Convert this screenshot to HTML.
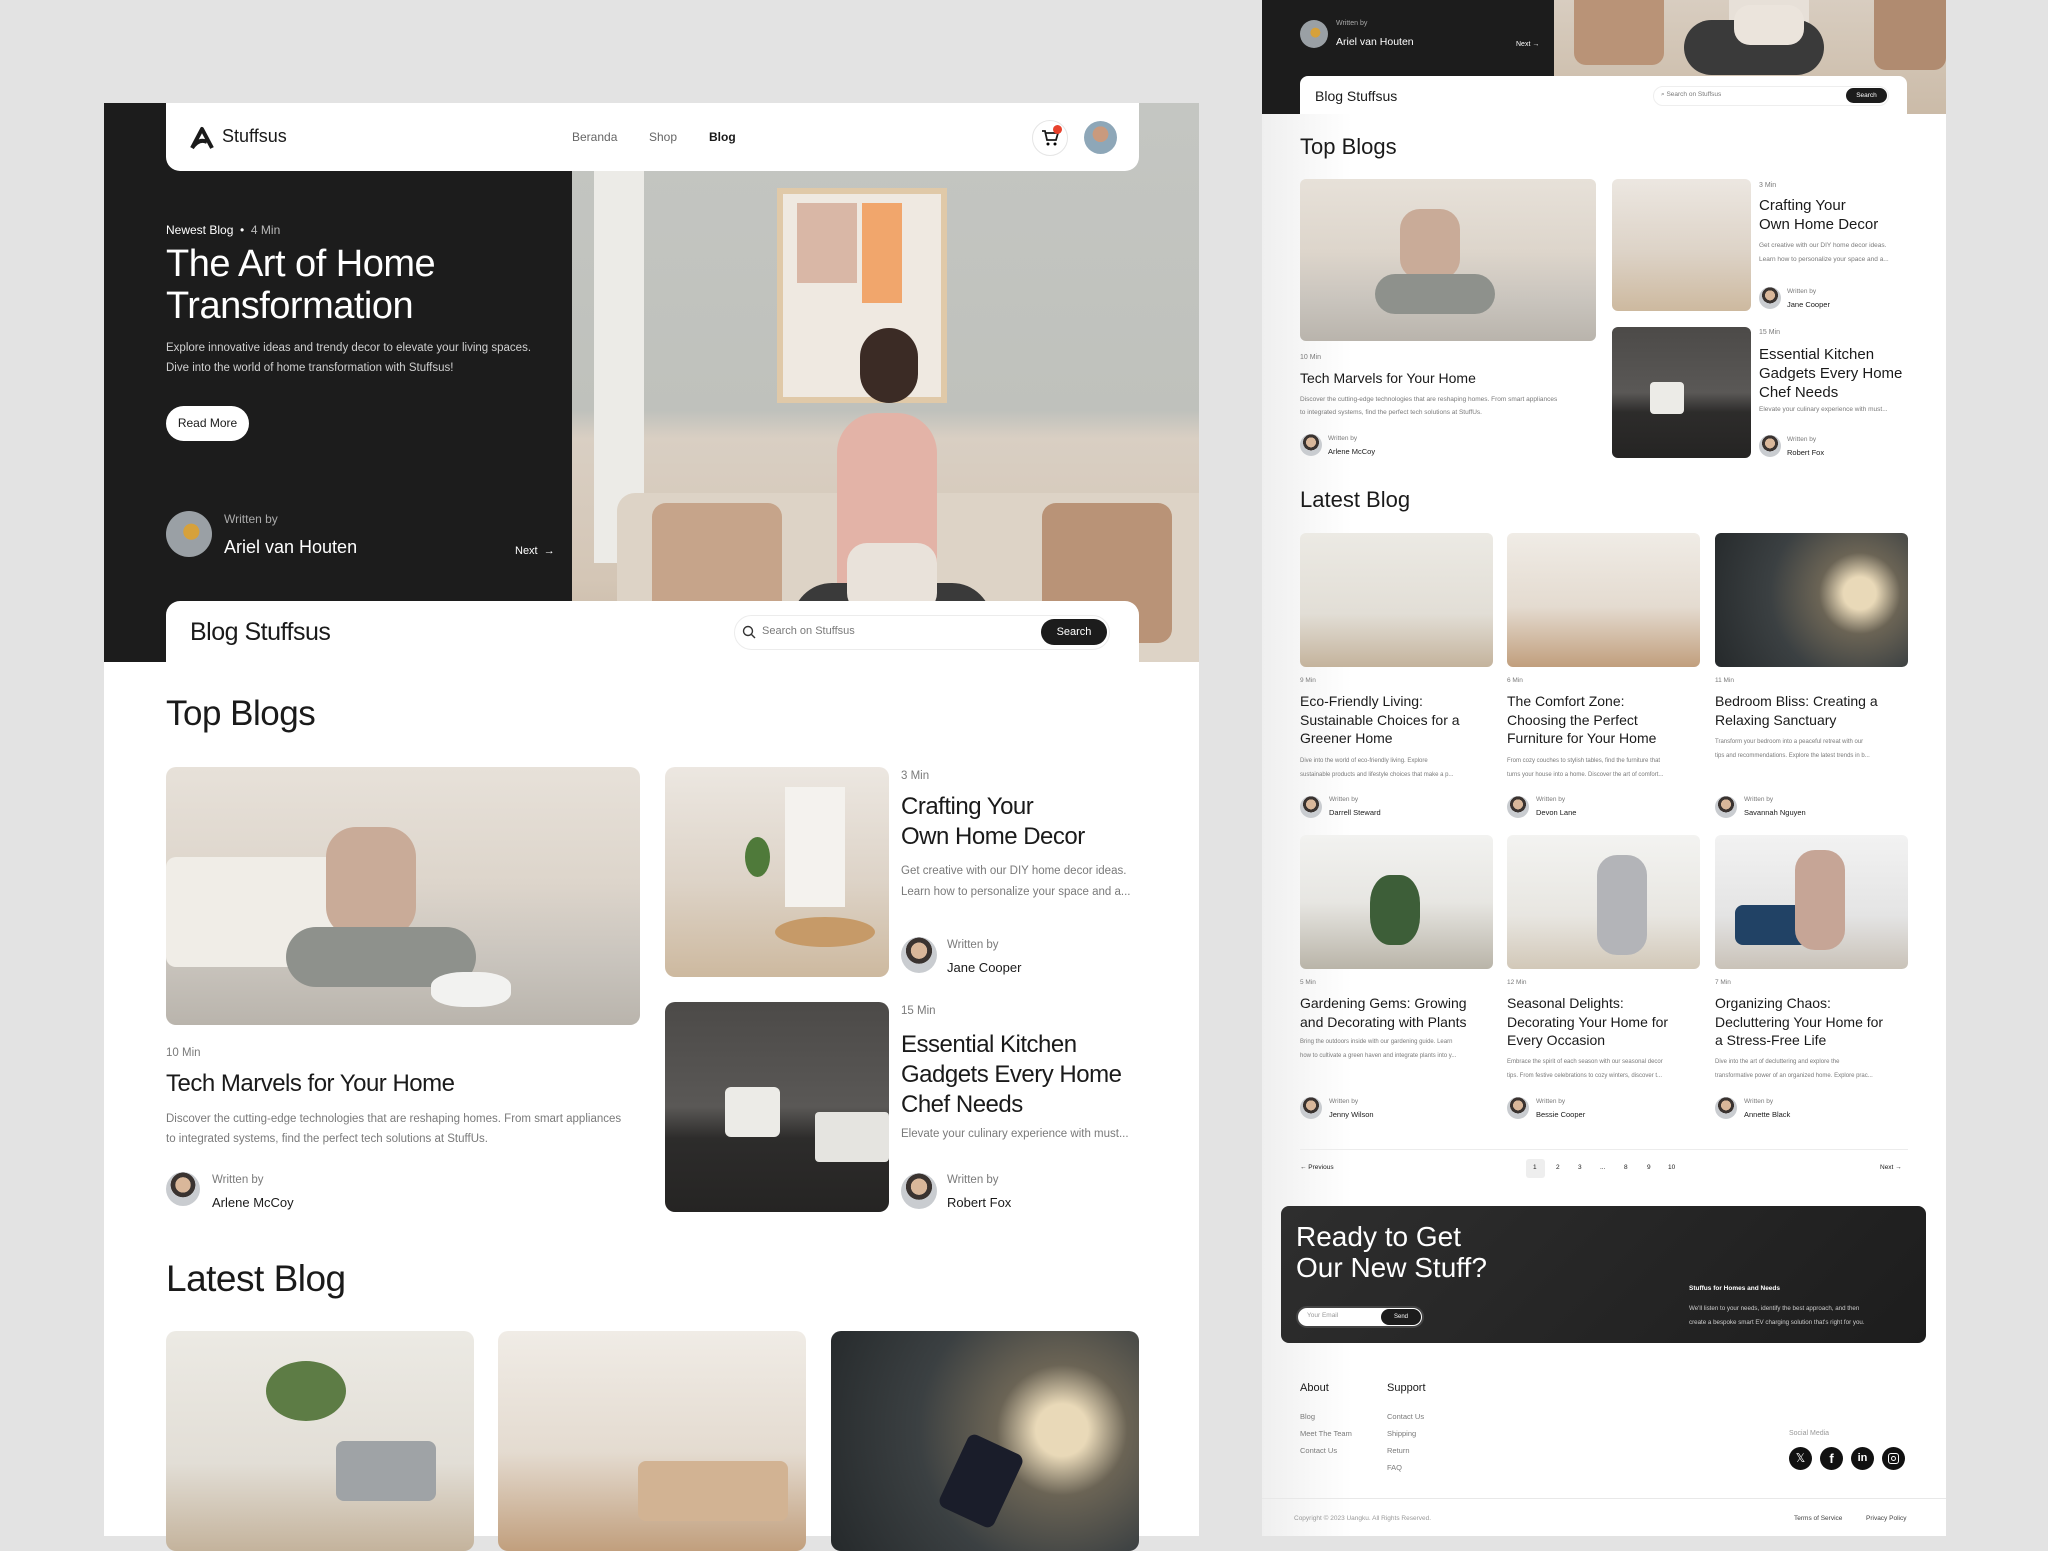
<!DOCTYPE html>
<html><head><meta charset="utf-8">
<style>
*{margin:0;padding:0;box-sizing:border-box}
body{width:2048px;height:1536px;background:#e3e3e3;font-family:"Liberation Sans",sans-serif;position:relative;overflow:hidden;color:#1a1a1a}
.a{position:absolute;white-space:nowrap}
.img{position:absolute;overflow:hidden}
.av{position:absolute;border-radius:50%;background:radial-gradient(circle at 50% 38%,#d9b79a 0 28%,#3a3330 29% 45%,#c9ccd0 46%)}
.g{color:#7a7a7a}
.t{letter-spacing:-0.5px}
</style></head><body>

<!-- LEFT CARD -->
<div class="a" style="left:104px;top:103px;width:1095px;height:1433px;background:#fff"></div>
<div class="a" style="left:104px;top:103px;width:468px;height:559px;background:#1c1c1c"></div>
<div class="img" style="left:572px;top:103px;width:627px;height:559px;background:linear-gradient(180deg,#c4c6c2 0%,#bfc1bc 55%,#d9cfc3 60%,#d4c6b6 85%,#c7b7a3 100%)">
  <div class="a" style="left:22px;top:60px;width:50px;height:400px;background:#ecebe7"></div>
  <div class="a" style="left:205px;top:85px;width:170px;height:215px;background:#efe9e1;border:6px solid #e0c9a8"></div>
  <div class="a" style="left:225px;top:100px;width:60px;height:80px;background:#d9b7a6"></div>
  <div class="a" style="left:290px;top:100px;width:40px;height:100px;background:#f1a66c"></div>
  <div class="a" style="left:45px;top:390px;width:600px;height:169px;background:#ddd3c6;border-radius:18px 18px 0 0"></div>
  <div class="a" style="left:80px;top:400px;width:130px;height:130px;background:#c6a48a;border-radius:14px"></div>
  <div class="a" style="left:470px;top:400px;width:130px;height:140px;background:#b99377;border-radius:14px"></div>
  <div class="a" style="left:265px;top:310px;width:100px;height:200px;background:#e3b3a7;border-radius:40px 40px 10px 10px"></div>
  <div class="a" style="left:288px;top:225px;width:58px;height:75px;background:#3b2b25;border-radius:30px"></div>
  <div class="a" style="left:220px;top:480px;width:200px;height:79px;background:#3a3a3a;border-radius:40px 40px 0 0"></div>
  <div class="a" style="left:275px;top:440px;width:90px;height:70px;background:#e9e2da;border-radius:20px"></div>
</div>
<!-- nav -->
<div class="a" style="left:166px;top:103px;width:973px;height:68px;background:#fff;border-radius:0 0 14px 14px"></div>
<svg class="a" style="left:189px;top:126px" width="26" height="24" viewBox="0 0 26 24"><path d="M3 22 L13 3 L23 22 M3 22 Q10 12 18 16" fill="none" stroke="#1a1a1a" stroke-width="4" stroke-linejoin="round"/></svg>
<div class="a" style="left:222px;top:126px;font-size:18px;font-weight:500">Stuffsus</div>
<div class="a g" style="left:572px;top:130px;font-size:12px;color:#666">Beranda</div>
<div class="a g" style="left:649px;top:130px;font-size:12px;color:#666">Shop</div>
<div class="a" style="left:709px;top:130px;font-size:12px;font-weight:bold">Blog</div>
<div class="a" style="left:1032px;top:120px;width:36px;height:36px;border-radius:50%;border:1px solid #e5e5e5;background:#fff"></div>
<svg class="a" style="left:1040px;top:128px" width="20" height="20" viewBox="0 0 20 20"><path d="M2 3h3l2 9h9l2-7H6" fill="none" stroke="#1a1a1a" stroke-width="1.8"/><circle cx="8" cy="16" r="1.5"/><circle cx="15" cy="16" r="1.5"/></svg>
<div class="a" style="left:1053px;top:125px;width:9px;height:9px;border-radius:50%;background:#e8412c"></div>
<div class="av" style="left:1084px;top:121px;width:33px;height:33px;background:radial-gradient(circle at 50% 40%,#c99a7e 0 30%,#8ea7b8 31%)"></div>
<!-- hero text -->
<div class="a" style="left:166px;top:223px;font-size:12px;color:#fff">Newest Blog &nbsp;•&nbsp; <span style="color:#bbb">4 Min</span></div>
<div class="a t" style="left:166px;top:243px;font-size:38px;line-height:42px;color:#fff;font-weight:500">The Art of Home<br>Transformation</div>
<div class="a" style="left:166px;top:338px;font-size:11.5px;line-height:20px;color:#cfcfcf">Explore innovative ideas and trendy decor to elevate your living spaces.<br>Dive into the world of home transformation with Stuffsus!</div>
<div class="a" style="left:166px;top:406px;width:83px;height:35px;border-radius:18px;background:#fff;font-size:12px;line-height:35px;text-align:center">Read More</div>
<div class="av" style="left:166px;top:511px;width:46px;height:46px;background:radial-gradient(circle at 55% 45%,#d6a13b 0 22%,#9aa0a5 23%)"></div>
<div class="a" style="left:224px;top:512px;font-size:12px;color:#aaa">Written by</div>
<div class="a" style="left:224px;top:537px;font-size:18px;color:#fff">Ariel van Houten</div>
<div class="a" style="left:515px;top:545px;font-size:11px;color:#fff">Next &nbsp;→</div>
<!-- blog stuffsus bar -->
<div class="a" style="left:166px;top:601px;width:973px;height:70px;background:#fff;border-radius:14px 14px 0 0"></div>
<div class="a t" style="left:190px;top:618px;font-size:25px;font-weight:500">Blog Stuffsus</div>
<div class="a" style="left:734px;top:615px;width:376px;height:35px;border:1px solid #ececec;border-radius:18px"></div>
<svg class="a" style="left:742px;top:625px" width="14" height="14" viewBox="0 0 14 14"><circle cx="6" cy="6" r="4.5" fill="none" stroke="#333" stroke-width="1.4"/><path d="M9.5 9.5L13 13" stroke="#333" stroke-width="1.4"/></svg>
<div class="a g" style="left:762px;top:625px;font-size:11px">Search on Stuffsus</div>
<div class="a" style="left:1041px;top:619px;width:66px;height:26px;border-radius:13px;background:#1c1c1c;color:#fff;font-size:11px;line-height:26px;text-align:center">Search</div>
<!-- top blogs -->
<div class="a t" style="left:166px;top:694px;font-size:35px;font-weight:500">Top Blogs</div>
<div class="img" style="left:166px;top:767px;width:474px;height:258px;border-radius:10px;background:linear-gradient(180deg,#e7e1d9 0%,#ddd5cb 45%,#c9c4bd 75%,#b9b4ac 100%)">
  <div class="a" style="left:0;top:90px;width:240px;height:110px;background:#f0ede7;border-radius:10px"></div>
  <div class="a" style="left:160px;top:60px;width:90px;height:110px;background:#c9ab98;border-radius:30px"></div>
  <div class="a" style="left:120px;top:160px;width:190px;height:60px;background:#8e918c;border-radius:30px"></div>
  <div class="a" style="left:265px;top:205px;width:80px;height:35px;background:#f2f2f0;border-radius:40%"></div>
</div>
<div class="a g" style="left:166px;top:1047px;font-size:11.5px">10 Min</div>
<div class="a t" style="left:166px;top:1070px;font-size:24px;font-weight:500">Tech Marvels for Your Home</div>
<div class="a g" style="left:166px;top:1109px;font-size:11.5px;line-height:20px">Discover the cutting-edge technologies that are reshaping homes. From smart appliances<br>to integrated systems, find the perfect tech solutions at StuffUs.</div>
<div class="av" style="left:166px;top:1172px;width:34px;height:34px"></div>
<div class="a g" style="left:212px;top:1174px;font-size:11.5px">Written by</div>
<div class="a" style="left:212px;top:1195px;font-size:13px;font-weight:500">Arlene McCoy</div>

<div class="img" style="left:665px;top:767px;width:224px;height:210px;border-radius:10px;background:linear-gradient(180deg,#ece7e1 0%,#ddd3c7 55%,#cdb99f 100%)">
  <div class="a" style="left:120px;top:20px;width:60px;height:120px;background:#f4f2ee"></div>
  <div class="a" style="left:110px;top:150px;width:100px;height:30px;background:#c69a68;border-radius:50%"></div>
  <div class="a" style="left:80px;top:70px;width:25px;height:40px;background:#4f7a3a;border-radius:50%"></div>
</div>
<div class="a g" style="left:901px;top:770px;font-size:11.5px">3 Min</div>
<div class="a t" style="left:901px;top:792px;font-size:24px;line-height:30px;font-weight:500">Crafting Your<br>Own Home Decor</div>
<div class="a g" style="left:901px;top:861px;font-size:11.5px;line-height:21px">Get creative with our DIY home decor ideas.<br>Learn how to personalize your space and a...</div>
<div class="av" style="left:901px;top:937px;width:36px;height:36px"></div>
<div class="a g" style="left:947px;top:939px;font-size:11.5px">Written by</div>
<div class="a" style="left:947px;top:960px;font-size:13px;font-weight:500">Jane Cooper</div>

<div class="img" style="left:665px;top:1002px;width:224px;height:210px;border-radius:10px;background:linear-gradient(180deg,#4c4a48 0%,#5a5856 50%,#2d2c2b 65%,#252423 100%)">
  <div class="a" style="left:60px;top:85px;width:55px;height:50px;background:#ecebe7;border-radius:6px"></div>
  <div class="a" style="left:150px;top:110px;width:74px;height:50px;background:#e5e4e0;border-radius:4px"></div>
</div>
<div class="a g" style="left:901px;top:1005px;font-size:11.5px">15 Min</div>
<div class="a t" style="left:901px;top:1030px;font-size:24px;line-height:30px;font-weight:500">Essential Kitchen<br>Gadgets Every Home<br>Chef Needs</div>
<div class="a g" style="left:901px;top:1128px;font-size:11.5px">Elevate your culinary experience with must...</div>
<div class="av" style="left:901px;top:1173px;width:36px;height:36px"></div>
<div class="a g" style="left:947px;top:1174px;font-size:11.5px">Written by</div>
<div class="a" style="left:947px;top:1195px;font-size:13px;font-weight:500">Robert Fox</div>

<div class="a t" style="left:166px;top:1258px;font-size:37px;font-weight:500">Latest Blog</div>
<div class="img" style="left:166px;top:1331px;width:308px;height:220px;border-radius:10px;background:linear-gradient(180deg,#eceae4 0%,#e2ded6 60%,#c4b39c 100%)"><div class="a" style="left:100px;top:30px;width:80px;height:60px;background:#5d7c45;border-radius:50%"></div><div class="a" style="left:170px;top:110px;width:100px;height:60px;background:#9fa3a6;border-radius:8px"></div></div>
<div class="img" style="left:498px;top:1331px;width:308px;height:220px;border-radius:10px;background:linear-gradient(180deg,#f0ece6 0%,#e4dbd0 55%,#c19f7d 100%)"><div class="a" style="left:140px;top:130px;width:150px;height:60px;background:#d2b393;border-radius:8px"></div></div>
<div class="img" style="left:831px;top:1331px;width:308px;height:220px;border-radius:10px;background:radial-gradient(circle at 75% 45%,#e9d9b8 0 10%,#6b6455 25%,#3b4042 55%,#25292b 100%)"><div class="a" style="left:120px;top:110px;width:60px;height:80px;background:#1a1d2a;border-radius:8px;transform:rotate(25deg)"></div></div>

<!-- RIGHT CARD -->
<div class="a" style="left:1262px;top:0;width:684px;height:1536px;background:linear-gradient(90deg,#efefef 0,#fff 90px)"></div>
<div class="a" style="left:1262px;top:0;width:292px;height:114px;background:#1c1c1c"></div>
<div class="img" style="left:1554px;top:0;width:392px;height:114px;background:linear-gradient(180deg,#d8cdc0,#cbbba8)">
  <div class="a" style="left:20px;top:0;width:90px;height:65px;background:#b99377;border-radius:0 0 12px 12px"></div>
  <div class="a" style="left:320px;top:0;width:72px;height:70px;background:#b08b70;border-radius:0 0 12px 12px"></div>
  <div class="a" style="left:175px;top:0;width:80px;height:40px;background:#e7e0d8;border-radius:0 0 20px 20px"></div>
  <div class="a" style="left:130px;top:20px;width:140px;height:55px;background:#3a3a3a;border-radius:30px"></div>
  <div class="a" style="left:180px;top:5px;width:70px;height:40px;background:#ebe4dc;border-radius:16px"></div>
</div>
<div class="av" style="left:1300px;top:20px;width:28px;height:28px;background:radial-gradient(circle at 55% 45%,#d6a13b 0 22%,#9aa0a5 23%)"></div>
<div class="a" style="left:1336px;top:20px;font-size:7px;color:#aaa">Written by</div>
<div class="a" style="left:1336px;top:36px;font-size:10.5px;color:#fff">Ariel van Houten</div>
<div class="a" style="left:1516px;top:41px;font-size:7px;color:#fff">Next →</div>
<div class="a" style="left:1300px;top:76px;width:607px;height:38px;background:#fff;border-radius:8px 8px 0 0"></div>
<div class="a" style="left:1315px;top:88px;font-size:14px;font-weight:500">Blog Stuffsus</div>
<div class="a" style="left:1653px;top:86px;width:236px;height:20px;border:1px solid #eee;border-radius:10px"></div>
<div class="a g" style="left:1661px;top:91px;font-size:6.5px">⌕ Search on Stuffsus</div>
<div class="a" style="left:1846px;top:88px;width:41px;height:15px;border-radius:8px;background:#1c1c1c;color:#fff;font-size:6.5px;line-height:15px;text-align:center">Search</div>

<div class="a" style="left:1300px;top:134px;font-size:22px;font-weight:500">Top Blogs</div>
<div class="img" style="left:1300px;top:179px;width:296px;height:162px;border-radius:6px;background:linear-gradient(180deg,#e7e1d9 0%,#ddd5cb 45%,#c9c4bd 75%,#b9b4ac 100%)"><div class="a" style="left:100px;top:30px;width:60px;height:70px;background:#c9ab98;border-radius:20px"></div><div class="a" style="left:75px;top:95px;width:120px;height:40px;background:#8e918c;border-radius:20px"></div></div>
<div class="a g" style="left:1300px;top:354px;font-size:7px">10 Min</div>
<div class="a" style="left:1300px;top:370px;font-size:14px;font-weight:500">Tech Marvels for Your Home</div>
<div class="a g" style="left:1300px;top:393px;font-size:6.5px;line-height:13px">Discover the cutting-edge technologies that are reshaping homes. From smart appliances<br>to integrated systems, find the perfect tech solutions at StuffUs.</div>
<div class="av" style="left:1300px;top:434px;width:22px;height:22px"></div>
<div class="a g" style="left:1328px;top:435px;font-size:6.5px">Written by</div>
<div class="a" style="left:1328px;top:447px;font-size:7.5px;font-weight:500">Arlene McCoy</div>

<div class="img" style="left:1612px;top:179px;width:139px;height:132px;border-radius:6px;background:linear-gradient(180deg,#ece7e1 0%,#ddd3c7 55%,#cdb99f 100%)"></div>
<div class="a g" style="left:1759px;top:182px;font-size:7px">3 Min</div>
<div class="a" style="left:1759px;top:196px;font-size:15px;line-height:19px;font-weight:500">Crafting Your<br>Own Home Decor</div>
<div class="a g" style="left:1759px;top:239px;font-size:6.5px;line-height:14px">Get creative with our DIY home decor ideas.<br>Learn how to personalize your space and a...</div>
<div class="av" style="left:1759px;top:287px;width:22px;height:22px"></div>
<div class="a g" style="left:1787px;top:288px;font-size:6.5px">Written by</div>
<div class="a" style="left:1787px;top:300px;font-size:7.5px;font-weight:500">Jane Cooper</div>

<div class="img" style="left:1612px;top:327px;width:139px;height:131px;border-radius:6px;background:linear-gradient(180deg,#4c4a48 0%,#5a5856 50%,#2d2c2b 65%,#252423 100%)"><div class="a" style="left:38px;top:55px;width:34px;height:32px;background:#ecebe7;border-radius:4px"></div></div>
<div class="a g" style="left:1759px;top:329px;font-size:7px">15 Min</div>
<div class="a" style="left:1759px;top:345px;font-size:15px;line-height:19px;font-weight:500">Essential Kitchen<br>Gadgets Every Home<br>Chef Needs</div>
<div class="a g" style="left:1759px;top:406px;font-size:6.5px">Elevate your culinary experience with must...</div>
<div class="av" style="left:1759px;top:435px;width:22px;height:22px"></div>
<div class="a g" style="left:1787px;top:436px;font-size:6.5px">Written by</div>
<div class="a" style="left:1787px;top:448px;font-size:7.5px;font-weight:500">Robert Fox</div>

<div class="a" style="left:1300px;top:487px;font-size:22px;font-weight:500">Latest Blog</div>

<!-- grid -->
<div class="img" style="left:1300px;top:533px;width:193px;height:134px;border-radius:6px;background:linear-gradient(180deg,#eceae4 0%,#e2ded6 60%,#c4b39c 100%)"></div>
<div class="img" style="left:1507px;top:533px;width:193px;height:134px;border-radius:6px;background:linear-gradient(180deg,#f0ece6 0%,#e4dbd0 55%,#c19f7d 100%)"></div>
<div class="img" style="left:1715px;top:533px;width:193px;height:134px;border-radius:6px;background:radial-gradient(circle at 75% 45%,#e9d9b8 0 10%,#6b6455 25%,#3b4042 55%,#25292b 100%)"></div>
<div class="img" style="left:1300px;top:835px;width:193px;height:134px;border-radius:6px;background:linear-gradient(180deg,#f2f2f0 0%,#e7e6e2 50%,#b9b4a8 100%)"><div class="a" style="left:70px;top:40px;width:50px;height:70px;background:#3d5e38;border-radius:40%"></div></div>
<div class="img" style="left:1507px;top:835px;width:193px;height:134px;border-radius:6px;background:linear-gradient(180deg,#f3f3f1 0%,#e8e6e1 60%,#d2c8b8 100%)"><div class="a" style="left:90px;top:20px;width:50px;height:100px;background:#b3b4b8;border-radius:20px"></div></div>
<div class="img" style="left:1715px;top:835px;width:193px;height:134px;border-radius:6px;background:linear-gradient(180deg,#f2f2f2 0%,#e4e4e4 60%,#c9c2b8 100%)"><div class="a" style="left:20px;top:70px;width:80px;height:40px;background:#214265;border-radius:8px"></div><div class="a" style="left:80px;top:15px;width:50px;height:100px;background:#c6a596;border-radius:20px"></div></div>

<div class="a g" style="left:1300px;top:677px;font-size:6.5px">9 Min</div>
<div class="a" style="left:1300px;top:692px;font-size:14px;line-height:18.5px;font-weight:500">Eco-Friendly Living:<br>Sustainable Choices for a<br>Greener Home</div>
<div class="a g" style="left:1300px;top:754px;font-size:6px;line-height:14px">Dive into the world of eco-friendly living. Explore<br>sustainable products and lifestyle choices that make a p...</div>
<div class="av" style="left:1300px;top:796px;width:22px;height:22px"></div>
<div class="a g" style="left:1329px;top:796px;font-size:6.5px">Written by</div>
<div class="a" style="left:1329px;top:808px;font-size:7.5px;font-weight:500">Darrell Steward</div>

<div class="a g" style="left:1507px;top:677px;font-size:6.5px">6 Min</div>
<div class="a" style="left:1507px;top:692px;font-size:14px;line-height:18.5px;font-weight:500">The Comfort Zone:<br>Choosing the Perfect<br>Furniture for Your Home</div>
<div class="a g" style="left:1507px;top:754px;font-size:6px;line-height:14px">From cozy couches to stylish tables, find the furniture that<br>turns your house into a home. Discover the art of comfort...</div>
<div class="av" style="left:1507px;top:796px;width:22px;height:22px"></div>
<div class="a g" style="left:1536px;top:796px;font-size:6.5px">Written by</div>
<div class="a" style="left:1536px;top:808px;font-size:7.5px;font-weight:500">Devon Lane</div>

<div class="a g" style="left:1715px;top:677px;font-size:6.5px">11 Min</div>
<div class="a" style="left:1715px;top:692px;font-size:14px;line-height:18.5px;font-weight:500">Bedroom Bliss: Creating a<br>Relaxing Sanctuary</div>
<div class="a g" style="left:1715px;top:735px;font-size:6px;line-height:14px">Transform your bedroom into a peaceful retreat with our<br>tips and recommendations. Explore the latest trends in b...</div>
<div class="av" style="left:1715px;top:796px;width:22px;height:22px"></div>
<div class="a g" style="left:1744px;top:796px;font-size:6.5px">Written by</div>
<div class="a" style="left:1744px;top:808px;font-size:7.5px;font-weight:500">Savannah Nguyen</div>

<div class="a g" style="left:1300px;top:979px;font-size:6.5px">5 Min</div>
<div class="a" style="left:1300px;top:994px;font-size:14px;line-height:18.5px;font-weight:500">Gardening Gems: Growing<br>and Decorating with Plants</div>
<div class="a g" style="left:1300px;top:1035px;font-size:6px;line-height:14px">Bring the outdoors inside with our gardening guide. Learn<br>how to cultivate a green haven and integrate plants into y...</div>
<div class="av" style="left:1300px;top:1097px;width:22px;height:22px"></div>
<div class="a g" style="left:1329px;top:1098px;font-size:6.5px">Written by</div>
<div class="a" style="left:1329px;top:1110px;font-size:7.5px;font-weight:500">Jenny Wilson</div>

<div class="a g" style="left:1507px;top:979px;font-size:6.5px">12 Min</div>
<div class="a" style="left:1507px;top:994px;font-size:14px;line-height:18.5px;font-weight:500">Seasonal Delights:<br>Decorating Your Home for<br>Every Occasion</div>
<div class="a g" style="left:1507px;top:1055px;font-size:6px;line-height:14px">Embrace the spirit of each season with our seasonal decor<br>tips. From festive celebrations to cozy winters, discover t...</div>
<div class="av" style="left:1507px;top:1097px;width:22px;height:22px"></div>
<div class="a g" style="left:1536px;top:1098px;font-size:6.5px">Written by</div>
<div class="a" style="left:1536px;top:1110px;font-size:7.5px;font-weight:500">Bessie Cooper</div>

<div class="a g" style="left:1715px;top:979px;font-size:6.5px">7 Min</div>
<div class="a" style="left:1715px;top:994px;font-size:14px;line-height:18.5px;font-weight:500">Organizing Chaos:<br>Decluttering Your Home for<br>a Stress-Free Life</div>
<div class="a g" style="left:1715px;top:1055px;font-size:6px;line-height:14px">Dive into the art of decluttering and explore the<br>transformative power of an organized home. Explore prac...</div>
<div class="av" style="left:1715px;top:1097px;width:22px;height:22px"></div>
<div class="a g" style="left:1744px;top:1098px;font-size:6.5px">Written by</div>
<div class="a" style="left:1744px;top:1110px;font-size:7.5px;font-weight:500">Annette Black</div>

<!-- pagination -->
<div class="a" style="left:1300px;top:1149px;width:608px;height:1px;background:#ececec"></div>
<div class="a" style="left:1300px;top:1164px;font-size:6.5px">← Previous</div>
<div class="a" style="left:1526px;top:1159px;width:19px;height:19px;border-radius:3px;background:#eee"></div>
<div class="a" style="left:1533px;top:1164px;font-size:6.5px">1</div>
<div class="a" style="left:1556px;top:1164px;font-size:6.5px">2</div>
<div class="a" style="left:1578px;top:1164px;font-size:6.5px">3</div>
<div class="a" style="left:1600px;top:1164px;font-size:6.5px">...</div>
<div class="a" style="left:1624px;top:1164px;font-size:6.5px">8</div>
<div class="a" style="left:1647px;top:1164px;font-size:6.5px">9</div>
<div class="a" style="left:1668px;top:1164px;font-size:6.5px">10</div>
<div class="a" style="left:1880px;top:1164px;font-size:6.5px">Next →</div>

<!-- newsletter -->
<div class="a" style="left:1281px;top:1206px;width:645px;height:137px;border-radius:8px;background:linear-gradient(135deg,#2e2e2e,#1d1d1d)"></div>
<div class="a" style="left:1296px;top:1221px;font-size:28px;line-height:31px;color:#fff;font-weight:500">Ready to Get<br>Our New Stuff?</div>
<div class="a" style="left:1296px;top:1306px;width:128px;height:22px;border-radius:11px;background:#fff;border:2px solid #444"></div>
<div class="a" style="left:1307px;top:1312px;font-size:6.5px;color:#999">Your Email</div>
<div class="a" style="left:1381px;top:1309px;width:40px;height:16px;border-radius:8px;background:#1c1c1c;color:#fff;font-size:6px;line-height:16px;text-align:center">Send</div>
<div class="a" style="left:1689px;top:1285px;font-size:6.5px;color:#fff;font-weight:bold">Stuffus for Homes and Needs</div>
<div class="a" style="left:1689px;top:1302px;font-size:6.2px;line-height:14px;color:#ccc">We'll listen to your needs, identify the best approach, and then<br>create a bespoke smart EV charging solution that's right for you.</div>

<!-- footer -->
<div class="a" style="left:1300px;top:1382px;font-size:11px;font-weight:500">About</div>
<div class="a" style="left:1387px;top:1382px;font-size:11px;font-weight:500">Support</div>
<div class="a g" style="left:1300px;top:1408px;font-size:7.5px;line-height:17px">Blog<br>Meet The Team<br>Contact Us</div>
<div class="a g" style="left:1387px;top:1408px;font-size:7.5px;line-height:17px">Contact Us<br>Shipping<br>Return<br>FAQ</div>
<div class="a g" style="left:1789px;top:1430px;font-size:7px;color:#999">Social Media</div>
<div class="a" style="left:1789px;top:1447px;width:23px;height:23px;border-radius:50%;background:#111;color:#fff;font-size:12px;line-height:23px;text-align:center">𝕏</div>
<div class="a" style="left:1820px;top:1447px;width:23px;height:23px;border-radius:50%;background:#111;color:#fff;font-size:13px;line-height:23px;text-align:center;font-weight:bold">f</div>
<div class="a" style="left:1851px;top:1447px;width:23px;height:23px;border-radius:50%;background:#111;color:#fff;font-size:11px;line-height:23px;text-align:center;font-weight:bold">in</div>
<div class="a" style="left:1882px;top:1447px;width:23px;height:23px;border-radius:50%;background:#111"></div>
<div class="a" style="left:1888px;top:1453px;width:11px;height:11px;border-radius:3px;border:1.5px solid #fff"></div>
<div class="a" style="left:1891px;top:1456px;width:5px;height:5px;border-radius:50%;border:1.2px solid #fff"></div>
<div class="a" style="left:1262px;top:1498px;width:684px;height:1px;background:#e8e8e8"></div>
<div class="a g" style="left:1294px;top:1515px;font-size:6.5px;color:#999">Copyright © 2023 Uangku. All Rights Reserved.</div>
<div class="a" style="left:1794px;top:1515px;font-size:6.5px;color:#444">Terms of Service</div>
<div class="a" style="left:1866px;top:1515px;font-size:6.5px;color:#444">Privacy Policy</div>
</body></html>
